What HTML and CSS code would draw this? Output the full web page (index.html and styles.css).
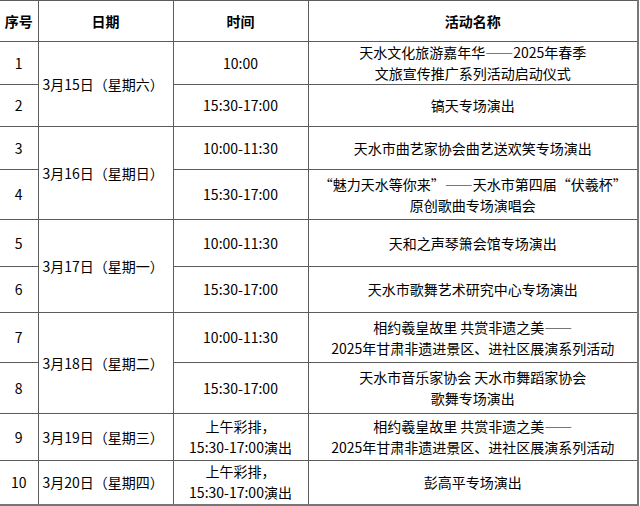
FILE: index.html
```html
<!DOCTYPE html>
<html lang="zh-CN">
<head>
<meta charset="utf-8">
<link rel="stylesheet" href="styles.css">
</head>
<body>
<table class="schedule">
  <colgroup>
    <col class="c-no">
    <col class="c-date">
    <col class="c-time">
    <col class="c-act">
  </colgroup>
  <thead>
    <tr class="h41">
      <th>序号</th>
      <th>日期</th>
      <th>时间</th>
      <th>活动名称</th>
    </tr>
  </thead>
  <tbody>
    <tr class="h42">
      <td>1</td>
      <td class="date" rowspan="2">3月15日（星期六）</td>
      <td>10:00</td>
      <td>天水文化旅游嘉年华——2025年春季<br>文旅宣传推广系列活动启动仪式</td>
    </tr>
    <tr class="h42">
      <td>2</td>
      <td>15:30-17:00</td>
      <td>镐天专场演出</td>
    </tr>
    <tr class="h43">
      <td>3</td>
      <td class="date" rowspan="2">3月16日（星期日）</td>
      <td>10:00-11:30</td>
      <td>天水市曲艺家协会曲艺送欢笑专场演出</td>
    </tr>
    <tr class="h50">
      <td>4</td>
      <td>15:30-17:00</td>
      <td>“魅力天水等你来”——天水市第四届“伏羲杯”<br>原创歌曲专场演唱会</td>
    </tr>
    <tr class="h47">
      <td>5</td>
      <td class="date" rowspan="2">3月17日（星期一）</td>
      <td>10:00-11:30</td>
      <td>天和之声琴箫会馆专场演出</td>
    </tr>
    <tr class="h46">
      <td>6</td>
      <td>15:30-17:00</td>
      <td>天水市歌舞艺术研究中心专场演出</td>
    </tr>
    <tr class="h50">
      <td>7</td>
      <td class="date" rowspan="2">3月18日（星期二）</td>
      <td>10:00-11:30</td>
      <td>相约羲皇故里 共赏非遗之美——<br>2025年甘肃非遗进景区、进社区展演系列活动</td>
    </tr>
    <tr class="h51">
      <td>8</td>
      <td>15:30-17:00</td>
      <td>天水市音乐家协会 天水市舞蹈家协会<br>歌舞专场演出</td>
    </tr>
    <tr class="h47">
      <td>9</td>
      <td class="date">3月19日（星期三）</td>
      <td>上午彩排，<br>15:30-17:00演出</td>
      <td>相约羲皇故里 共赏非遗之美——<br>2025年甘肃非遗进景区、进社区展演系列活动</td>
    </tr>
    <tr class="h44">
      <td>10</td>
      <td class="date">3月20日（星期四）</td>
      <td>上午彩排，<br>15:30-17:00演出</td>
      <td>彭高平专场演出</td>
    </tr>
  </tbody>
</table>
</body>
</html>
```

FILE: styles.css
```css
html, body {
  margin: 0;
  padding: 0;
  background: #ffffff;
}

.schedule {
  border-collapse: collapse;
  table-layout: fixed;
  width: 638px;
  font-family: "Noto Sans CJK SC", "Noto Sans", sans-serif;
  font-size: 14px;
  line-height: 21px;
  color: #000000;
}

.c-no { width: 38px; }
.c-date { width: 135px; }
.c-time { width: 135px; }
.c-act { width: 330px; }

.schedule th,
.schedule td {
  border: 1px solid #5c5c5c;
  padding: 0 2px;
  text-align: center;
  vertical-align: middle;
  white-space: nowrap;
}

.schedule th {
  font-weight: bold;
}

.schedule tr > :first-child {
  border-left: none;
}

.schedule tr > :last-child {
  border-right: 2px solid #777777;
}

.schedule tbody tr:last-child td {
  border-bottom: 2px solid #777777;
}

.schedule td.date {
  text-align: left;
  padding-left: 4px;
  border-right: 1px solid #5c5c5c;
}

.h41 { height: 41px; }
.h42 { height: 42px; }
.h43 { height: 43px; }
.h44 { height: 44px; }
.h46 { height: 46px; }
.h47 { height: 47px; }
.h50 { height: 50px; }
.h51 { height: 51px; }
```
